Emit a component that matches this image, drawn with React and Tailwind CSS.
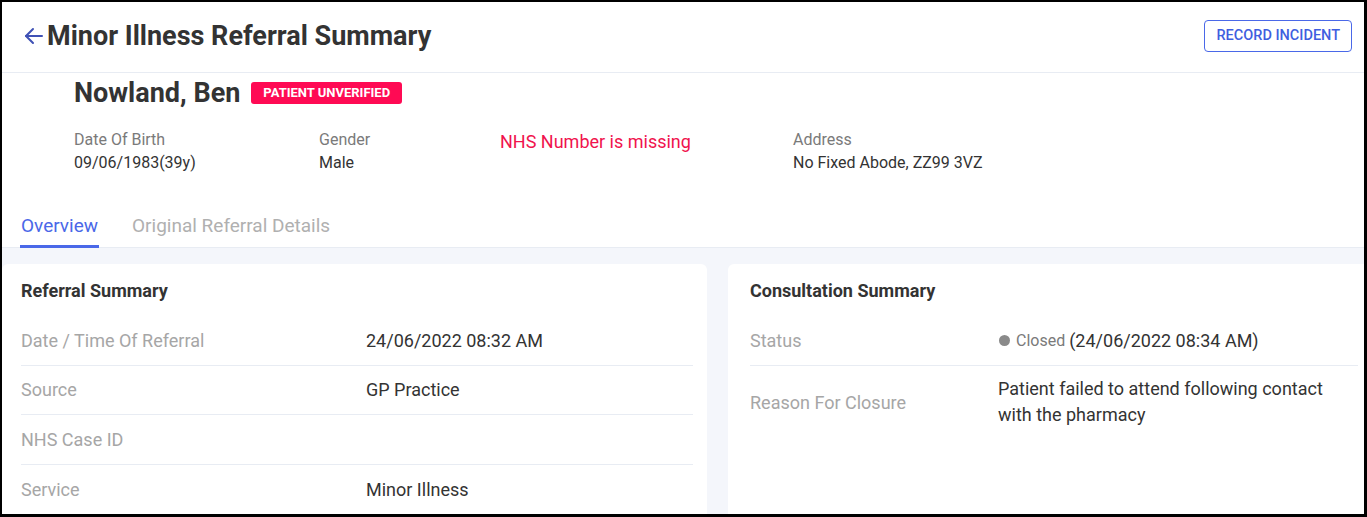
import React from "react";

function ArrowLeft() {
  return (
    <svg width="24" height="24" viewBox="0 0 24 24" fill="none" stroke="#3f51b5" strokeWidth="2" strokeLinecap="round" strokeLinejoin="round">
      <path d="M20 12H4" />
      <path d="M11 19l-7-7 7-7" />
    </svg>
  );
}

function Row({ label, children, last }) {
  return (
    <div className={`flex items-center h-[49.5px] ${last ? "" : "border-b border-[#e8ecf3]"}`}>
      <div className="w-[345px] shrink-0 text-[18px] text-[#a6a6a6]">{label}</div>
      <div className="text-[18px] text-[#333333]">{children}</div>
    </div>
  );
}

export default function App() {
  return (
    <div
      className="w-[1367px] h-[517px] box-border border-t-2 border-l-2 border-r-[3px] border-b-[3px] border-black bg-white flex flex-col overflow-hidden"
      style={{ fontFamily: "Roboto, 'Liberation Sans', sans-serif" }}
    >
      {/* Header */}
      <div className="h-[71px] shrink-0 flex items-start justify-between pt-[18px] pl-[20px] pr-[12px] border-b border-[#e8ecf3]">
        <div className="flex items-center h-[32px] gap-[1px]">
          <ArrowLeft />
          <h1 className="text-[27px] font-bold text-[#333333] leading-none">Minor Illness Referral Summary</h1>
        </div>
        <button className="h-[32px] px-[11px] border border-[#4a68e8] rounded-[4px] text-[14.5px] font-medium text-[#3f5ee0] bg-white">
          RECORD INCIDENT
        </button>
      </div>

      {/* Patient */}
      <div className="shrink-0 pl-[72px]">
        <div className="h-[40px] flex items-center gap-[11px]">
          <span className="text-[27px] font-bold text-[#333333] leading-none">Nowland, Ben</span>
          <span className="h-[22px] px-[12px] flex items-center rounded-[3px] bg-[#ff0a54] text-white text-[13px] font-bold">
            PATIENT UNVERIFIED
          </span>
        </div>
        <div className="flex mt-[16px]">
          <div className="w-[245px]">
            <div className="text-[16px] leading-[22px] text-[#7a7a7a]">Date Of Birth</div>
            <div className="text-[16px] leading-[22px] text-[#333333] mt-[1px]">09/06/1983(39y)</div>
          </div>
          <div className="w-[181px]">
            <div className="text-[16px] leading-[22px] text-[#7a7a7a]">Gender</div>
            <div className="text-[16px] leading-[22px] text-[#333333] mt-[1px]">Male</div>
          </div>
          <div className="w-[293px]">
            <div className="text-[18px] leading-[26px] text-[#f0134d]">NHS Number is missing</div>
          </div>
          <div>
            <div className="text-[16px] leading-[22px] text-[#7a7a7a]">Address</div>
            <div className="text-[16px] leading-[22px] text-[#333333] mt-[1px]">No Fixed Abode, ZZ99 3VZ</div>
          </div>
        </div>
      </div>

      {/* Tabs */}
      <div className="shrink-0 mt-[40px] flex gap-[33px] pl-[18px] border-b border-[#e8ecf3]">
        <div className="pb-[7px] border-b-[3px] border-[#4a68e8] text-[19px] leading-[24px] text-[#4a68e8] px-[1px] -mb-px">
          Overview
        </div>
        <div className="pb-[7px] text-[19px] leading-[24px] text-[#b0b0b0]">Original Referral Details</div>
      </div>

      {/* Content */}
      <div className="flex-1 bg-[#f4f6fb] pt-[16px] flex gap-[21px] min-h-0">
        <div className="w-[705px] shrink-0 bg-white rounded-t-[6px] pl-[19px] pr-[14px] pt-[16px]">
          <div className="text-[18px] font-bold text-[#333333] leading-[22px] mb-[14px]">Referral Summary</div>
          <Row label="Date / Time Of Referral">24/06/2022 08:32 AM</Row>
          <Row label="Source">GP Practice</Row>
          <Row label="NHS Case ID"></Row>
          <Row label="Service" last>Minor Illness</Row>
        </div>
        <div className="flex-1 bg-white rounded-t-[6px] pl-[22px] pr-[12px] pt-[16px]">
          <div className="text-[18px] font-bold text-[#333333] leading-[22px] mb-[14px]">Consultation Summary</div>
          <div className="flex items-center h-[50px] border-b border-[#e8ecf3]">
            <div className="w-[248px] shrink-0 text-[18px] text-[#a6a6a6]">Status</div>
            <div className="flex items-center">
              <span className="w-[11px] h-[11px] rounded-full bg-[#8a8a8a] mr-[6px] ml-[1px]"></span>
              <span className="text-[16px] text-[#7a7a7a] mr-[4px]">Closed</span>
              <span className="text-[18px] text-[#333333]">(24/06/2022 08:34 AM)</span>
            </div>
          </div>
          <div className="flex items-center py-[10px]">
            <div className="w-[248px] shrink-0 text-[18px] text-[#a6a6a6]">Reason For Closure</div>
            <div className="text-[18px] leading-[26px] text-[#333333] w-[360px]">
              Patient failed to attend following contact with the pharmacy
            </div>
          </div>
        </div>
      </div>
    </div>
  );
}
